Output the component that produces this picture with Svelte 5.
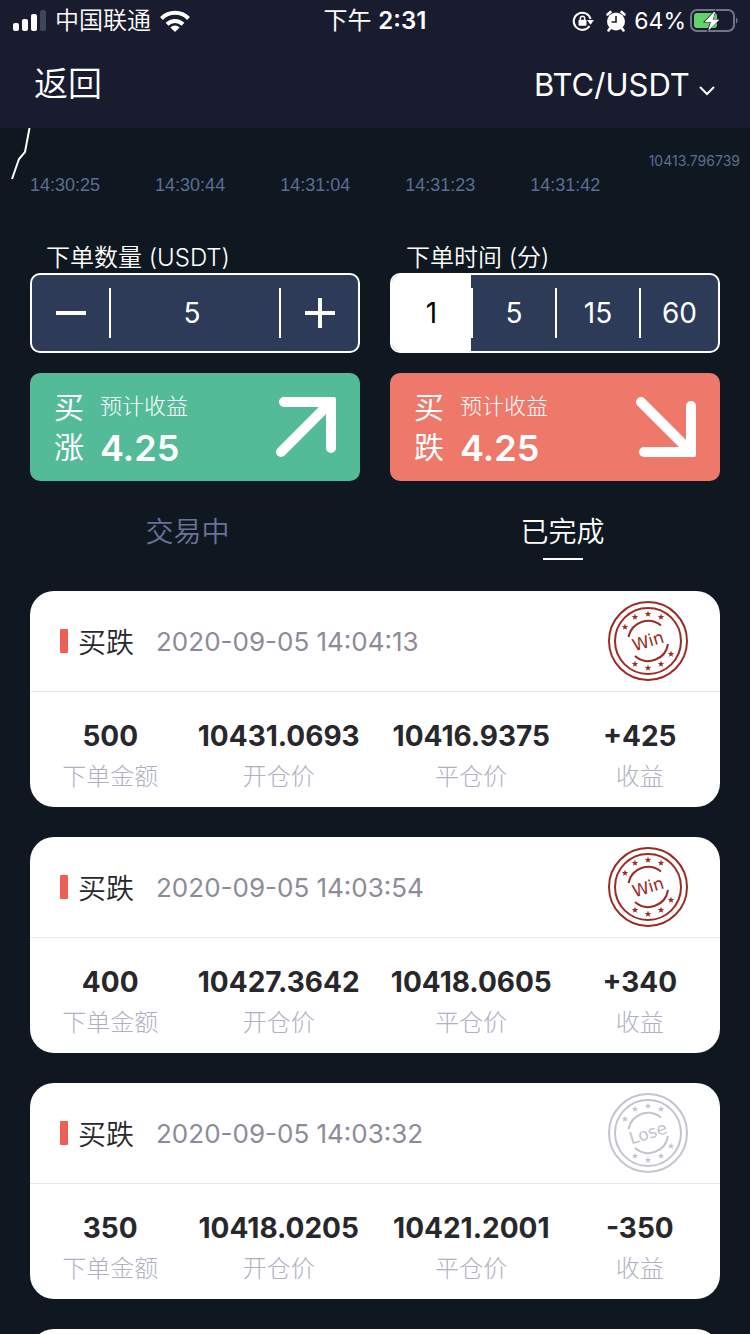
<script>
	const ticks = ['14:30:25', '14:30:44', '14:31:04', '14:31:23', '14:31:42'];
	const durations = [1, 5, 15, 60];
	const payout = 0.85;

	const trades = [
		{ time: '2020-09-05 14:04:13', amount: 500, open: '10431.0693', close: '10416.9375', profit: '+425' },
		{ time: '2020-09-05 14:03:54', amount: 400, open: '10427.3642', close: '10418.0605', profit: '+340' },
		{ time: '2020-09-05 14:03:32', amount: 350, open: '10418.0205', close: '10421.2001', profit: '-350' }
	];

	// star centres inside the 80x80 stamp
	const stars = [
		[17, 26], [27, 16], [40, 13], [53, 16],
		[27, 63], [40, 67], [53, 63], [63, 53]
	];

	let amount = $state(5);
	let duration = $state(1);
	let tab = $state('done');
	let expected = $derived((amount * payout).toFixed(2));
</script>

<div class="screen">
	<div class="status">
		<div class="status-left">
			<svg width="34" height="22" viewBox="0 0 34 22" fill="#fff">
				<rect x="1" y="13" width="6" height="8" rx="2" />
				<rect x="10" y="9" width="6" height="12" rx="2" />
				<rect x="19" y="4" width="6" height="17" rx="2" />
				<rect x="28" y="0" width="6" height="21" rx="2" fill="#41455a" />
			</svg>
			<span>中国联通</span>
			<svg width="30" height="22" viewBox="0 0 30 22" fill="none" stroke="#fff" stroke-width="4">
				<path d="M1.500 8.500a19 19 0 0 1 27 0" />
				<path d="M7 14.200a11.500 11.500 0 0 1 16 0" />
				<path d="M15 22l-4.600-4.600a6.600 6.600 0 0 1 9.200 0z" fill="#fff" stroke="none" />
			</svg>
		</div>
		<span class="clock">下午 <b>2:31</b></span>
		<div class="status-right">
			<svg width="22" height="22" viewBox="0 0 22 22" fill="none" stroke="#fff" stroke-width="2">
				<path d="M17.500 16A8.600 8.600 0 1 1 18.600 9" />
				<path d="M15 10h7l-3.500 4.800z" fill="#fff" stroke="none" />
				<rect x="6.500" y="9.800" width="8" height="6" rx="1" fill="#fff" stroke="none" />
				<path d="M8.300 10V8.400a2.200 2.200 0 0 1 4.400 0V10" stroke-width="1.400" />
			</svg>
			<svg class="alarm" width="20" height="22" viewBox="0 0 20 22">
				<circle cx="10" cy="11.500" r="9" fill="#fff" />
				<path d="M1.500 4.500l3-2.500M18.500 4.500l-3-2.500M4 18.500L2.500 20.500M16 18.500l1.500 2" stroke="#fff" stroke-width="2.600" stroke-linecap="round" />
				<path d="M10 6v6H5.500" fill="none" stroke="#191b2e" stroke-width="1.600" />
			</svg>
			<span>64%</span>
			<svg width="48" height="24" viewBox="0 0 48 24">
				<rect x="1" y="1" width="43" height="21" rx="6" fill="none" stroke="#72748a" stroke-width="2" />
				<path d="M46 8.500c2 1 2 5 0 6z" fill="#72748a" />
				<rect x="4" y="4" width="23" height="15" rx="3" fill="#65d16b" />
				<path d="M26 0L13 13.500h7L16.500 23.500 31 10h-7.500z" fill="#191b2e" />
				<path d="M24.500 3L15.500 12.500h6L19 20.500 28.500 11h-6.300z" fill="#fff" stroke="#fff" />
			</svg>
		</div>
	</div>

	<header>
		<button class="back">返回</button>
		<label class="pair">
			<select aria-label="交易对">
				<option>BTC/USDT</option>
			</select>
			<svg width="18" height="12" viewBox="0 0 18 12" fill="none" stroke="#fff" stroke-width="2">
				<path d="M2 2l7 7 7-7" />
			</svg>
		</label>
	</header>

	<section class="chart">
		<div class="plot">
			<svg width="40" height="52" viewBox="0 0 40 52" fill="none" stroke="#fff" stroke-width="2">
				<path d="M12 51l7-20 6-7 4.500-24" />
			</svg>
			<span>10413.796739</span>
		</div>
		<div class="axis">
			{#each ticks as tick}
				<span>{tick}</span>
			{/each}
		</div>
	</section>

	<section class="order">
		<div>
			<label class="caption" for="amount">下单数量 (USDT)</label>
			<div class="box stepper">
				<button aria-label="减少" onclick={() => (amount = Math.max(1, amount - 1))}>
					<svg width="30" height="30" viewBox="0 0 30 30"><path d="M0 15h30" stroke="#fff" stroke-width="4" /></svg>
				</button>
				<input id="amount" type="text" inputmode="numeric" bind:value={amount} />
				<button aria-label="增加" onclick={() => (amount = Number(amount) + 1)}>
					<svg width="30" height="30" viewBox="0 0 30 30"><path d="M0 15h30M15 0v30" stroke="#fff" stroke-width="4" /></svg>
				</button>
			</div>
		</div>

		<div role="radiogroup" aria-labelledby="duration-caption">
			<span class="caption" id="duration-caption">下单时间 (分)</span>
			<div class="box durations">
				{#each durations as d}
					<label class:active={duration === d}>
						<input type="radio" name="duration" value={d} bind:group={duration} />
						<span>{d}</span>
					</label>
				{/each}
			</div>
		</div>

		<button class="buy up">
			<span class="side">买<br />涨</span>
			<span class="expect">
				<small>预计收益</small>
				<strong>{expected}</strong>
			</span>
			<svg width="62" height="62" viewBox="0 0 62 62" fill="none" stroke="#fff" stroke-width="10" stroke-linecap="round" stroke-linejoin="round">
				<path d="M9 6h47v46M6 56L54 8" />
				<path d="M54 1h5q2 0 2 2v5z" fill="#fff" stroke="none" />
			</svg>
		</button>

		<button class="buy down">
			<span class="side">买<br />跌</span>
			<span class="expect">
				<small>预计收益</small>
				<strong>{expected}</strong>
			</span>
			<svg width="62" height="62" viewBox="0 0 62 62" fill="none" stroke="#fff" stroke-width="10" stroke-linecap="round" stroke-linejoin="round">
				<path d="M9 56h47V10M6 6L54 54" />
				<path d="M54 61h5q2 0 2-2v-5z" fill="#fff" stroke="none" />
			</svg>
		</button>
	</section>

	<nav class="tabs">
		<button class:active={tab === 'open'} onclick={() => (tab = 'open')}>交易中</button>
		<button class:active={tab === 'done'} onclick={() => (tab = 'done')}>已完成</button>
	</nav>

	<main>
		{#each trades as trade}
			<article class="card">
				<div class="card-head">
					<i></i>
					<h2>买跌</h2>
					<time>{trade.time}</time>
					<svg class="stamp" class:lose={trade.profit.startsWith('-')} width="80" height="80" viewBox="0 0 80 80">
						<g fill="none" stroke="currentColor" stroke-width="2">
							<circle cx="40" cy="40" r="39" />
							<circle cx="40" cy="40" r="33" />
							<path d="M20.500 36A20 20 0 0 1 53 24.500" />
							<path d="M27 55A20 20 0 0 0 60 43" />
						</g>
						{#each stars as [x, y]}
							<path
								transform="translate({x} {y})"
								d="M0-3.200L.9-1 3.200-.9 1.400.6 2 2.800 0 1.500-2 2.800-1.400.6-3.200-.9-.9-1z"
								fill="currentColor"
							/>
						{/each}
						<text x="40" y="46" text-anchor="middle" transform="rotate(-17 40 40)">
							{trade.profit.startsWith('-') ? 'Lose' : 'Win'}
						</text>
					</svg>
				</div>
				<dl>
					<div><dd>{trade.amount}</dd><dt>下单金额</dt></div>
					<div><dd>{trade.open}</dd><dt>开仓价</dt></div>
					<div><dd>{trade.close}</dd><dt>平仓价</dt></div>
					<div><dd>{trade.profit}</dd><dt>收益</dt></div>
				</dl>
			</article>
		{/each}
		<!-- next page loads into this one -->
		<article class="card pending"></article>
	</main>
</div>

<style>
	:global(body) {
		background: #0f1720;
	}
	.screen {
		display: flex;
		flex-direction: column;
		height: 100vh;
		overflow: hidden;
		background: #0f1720;
		color: #fff;
		font-family: Inter, 'Noto Sans CJK SC', sans-serif;
		font-weight: 350;
	}
	button,
	input,
	select {
		margin: 0;
		padding: 0;
		border: 0;
		border-radius: 0;
		background: none;
		color: inherit;
		font: inherit;
	}
	svg {
		display: block;
		flex: none;
	}

	.status {
		display: grid;
		grid-template-columns: 1fr auto 1fr;
		align-items: center;
		height: 40px;
		padding: 0 12px;
		background: #191b2e;
		font-size: 24px;
		line-height: 42px;
	}
	.status-left,
	.status-right {
		display: flex;
		align-items: center;
		gap: 9px;
	}
	.status-right {
		justify-content: flex-end;
		gap: 4px;
		font-size: 23px;
		font-weight: 400;
	}
	.alarm {
		margin: 0 4px 0 8px;
	}
	.clock {
		font-weight: 400;
	}
	.clock b {
		font-weight: 600;
	}

	header {
		display: flex;
		align-items: center;
		justify-content: space-between;
		height: 88px;
		padding: 0 34px;
		background: #191b2e;
	}
	.back {
		padding-bottom: 6px;
		font-size: 34px;
	}
	.pair {
		display: flex;
		align-items: center;
		gap: 8px;
		font-size: 31px;
		font-weight: 400;
	}
	.pair select {
		appearance: none;
	}
	.pair svg {
		margin-top: 14px;
	}

	.plot {
		display: flex;
		align-items: flex-end;
		justify-content: space-between;
		height: 48px;
		padding-right: 10px;
		color: #5c6e94;
		font-size: 14px;
		font-weight: 400;
		line-height: 30px;
	}
	.plot svg {
		align-self: flex-start;
	}
	.axis {
		display: flex;
		gap: 55px;
		padding-left: 30px;
		color: #5c6e94;
		font: 18px/18px 'Liberation Sans', sans-serif;
	}

	.order {
		display: grid;
		grid-template-columns: repeat(2, minmax(0, 1fr));
		gap: 20px 30px;
		padding: 49px 30px 0;
	}
	.caption {
		display: block;
		padding-left: 16px;
		font-size: 24px;
		line-height: 30px;
	}
	.box {
		box-sizing: border-box;
		height: 80px;
		border: 2px solid #fff;
		border-radius: 10px;
		background: #2d3b59;
		font-size: 28px;
		font-weight: 400;
		overflow: hidden;
	}
	.stepper {
		display: flex;
		align-items: center;
	}
	.stepper button {
		display: flex;
		justify-content: center;
		width: 77px;
	}
	.stepper input {
		flex: 1;
		min-width: 0;
		height: 50px;
		padding-right: 6px;
		border: solid #fff;
		border-width: 0 2px;
		text-align: center;
	}
	/* the filled first segment covers the box's own edge */
	.durations {
		display: grid;
		grid-template-columns: 1fr 84px 84px 1fr;
	}
	.durations label {
		display: flex;
		align-items: center;
		text-align: center;
	}
	.durations label + label::before {
		content: '';
		width: 2px;
		height: 50px;
		background: #fff;
	}
	.durations input {
		appearance: none;
		width: 0;
	}
	.durations span {
		flex: 1;
	}
	.durations .active {
		background: #fff;
		box-shadow: 0 0 0 2px #fff;
		clip-path: inset(-2px 0 -2px -2px);
		color: #000;
	}

	.buy {
		display: flex;
		align-items: center;
		height: 108px;
		padding: 0 23px 0 24px;
		border-radius: 10px;
		text-align: left;
	}
	.up {
		background: #53bb98;
	}
	.down {
		background: #ee786a;
	}
	.side {
		font-size: 30px;
		font-weight: 400;
		line-height: 40px;
	}
	.expect {
		display: flex;
		flex: 1;
		flex-direction: column;
		padding-left: 16px;
	}
	.expect small {
		font-size: 22px;
		font-weight: 300;
		line-height: 42px;
	}
	.expect strong {
		font-size: 36px;
		font-weight: 600;
		line-height: 42px;
	}

	.tabs {
		display: flex;
		padding: 26px 0 31px;
	}
	.tabs button {
		display: flex;
		flex: 1;
		flex-direction: column;
		align-items: center;
		gap: 1px;
		color: #6b7299;
		font-size: 28px;
		line-height: 50px;
	}
	.tabs button::after {
		content: '';
		width: 40px;
		height: 2px;
	}
	.tabs .active {
		color: #fff;
	}
	.tabs .active::after {
		background: #fff;
	}

	main {
		display: flex;
		flex: 1;
		flex-direction: column;
		gap: 30px;
		min-height: 0;
		padding: 0 30px;
		overflow: hidden;
	}
	.card {
		flex: none;
		border-radius: 24px;
		background: #fff;
		color: #28282c;
	}
	.pending {
		height: 216px;
	}
	.card-head {
		display: flex;
		align-items: center;
		height: 100px;
		padding: 0 32px 0 30px;
		border-bottom: 1px solid #e8e8ec;
	}
	.card-head i {
		width: 8px;
		height: 24px;
		border-radius: 1px;
		background: #ee6055;
	}
	h2 {
		margin: 0 22px 0 10px;
		font-size: 28px;
		font-weight: 350;
	}
	time {
		flex: 1;
		color: #8c8c98;
		font-size: 26px;
		font-weight: 400;
	}
	.stamp {
		color: #9c2a25;
	}
	.stamp.lose {
		color: #c3c4d0;
	}
	.stamp text {
		fill: currentColor;
		font-family: 'DejaVu Sans', sans-serif;
		font-size: 17px;
		font-weight: 400;
	}
	dl {
		display: grid;
		grid-template-columns: 3fr 4fr 4fr 3fr;
		margin: 0;
		padding: 23px 8px 10px;
		text-align: center;
	}
	dd {
		margin: 0;
		font-size: 28px;
		font-weight: 700;
		line-height: 42px;
	}
	dt {
		color: #b0b0c2;
		font-size: 24px;
		font-weight: 300;
		line-height: 40px;
	}
</style>
